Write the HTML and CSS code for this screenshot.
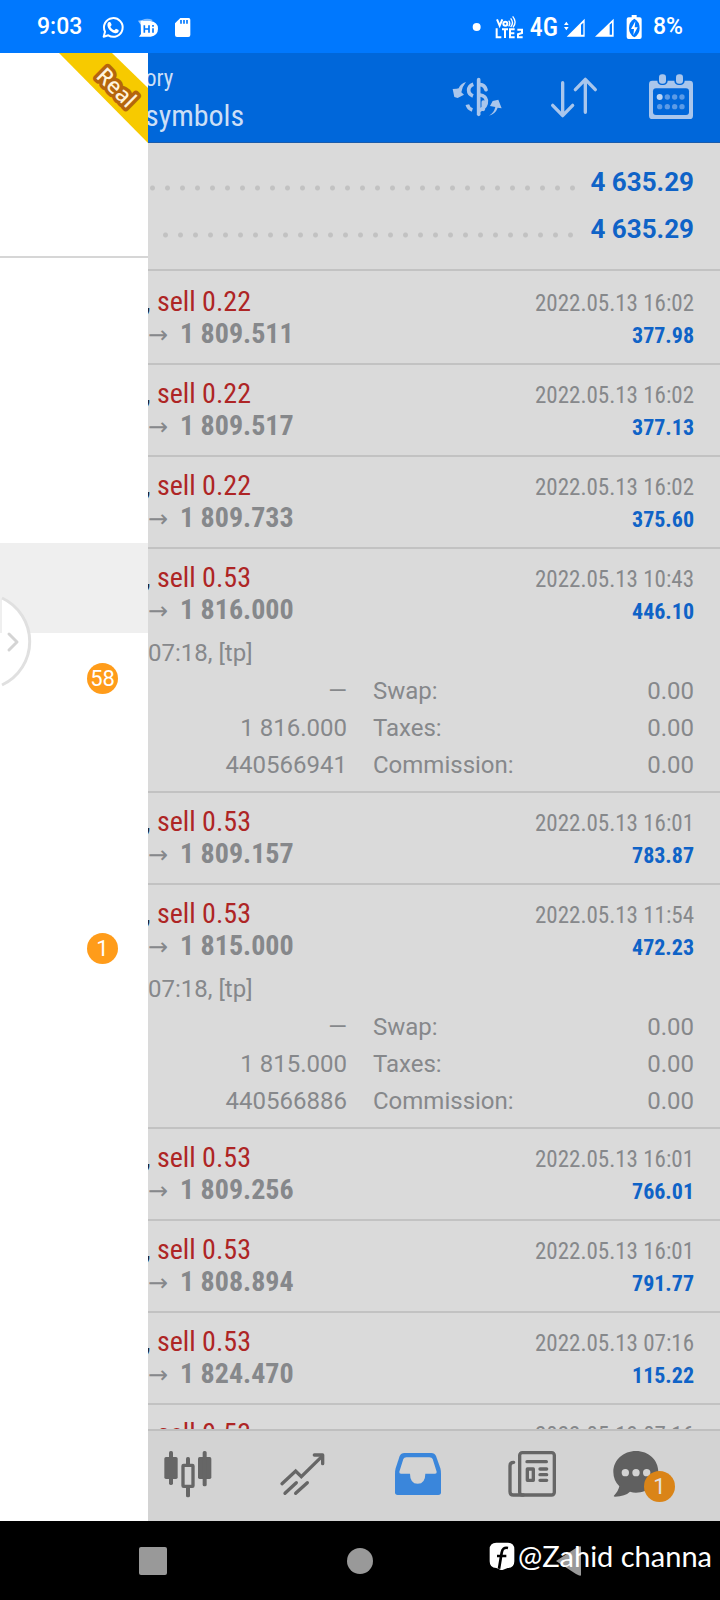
FILE: index.html
```html
<!DOCTYPE html>
<html lang="en">
<head>
<meta charset="utf-8">
<meta name="viewport" content="width=device-width, initial-scale=1">
<title>History</title>
<link rel="stylesheet" href="styles.css">
</head>
<body>
<div class="phone">
  <div class="status">
    <span class="status-text time">9:03</span>
    <svg class="notifs" width="96" height="28" viewBox="300 36 288 84" aria-hidden="true">
      <path d="M311 107l4-15a28 28 0 1 1 10 11z" fill="none" stroke="#fff" stroke-width="6" stroke-linejoin="round"/>
      <path d="M323 67c3-6 8-5 10 0l2 5-4 5c3 6 7 9 12 11l5-5 8 4c1 8-6 11-13 9-12-3-24-17-20-29z" fill="#fff"/>
      <path d="M414 59l14-2-6 14z" fill="#fff" opacity=".6"/><path d="M426 57q16-8 32 0l-4 5h-30z" fill="#fff" opacity=".5"/>
      <path d="M422 60h28q24 3 24 23t-22 24h-35l6-8z" fill="#fff"/>
      <path d="M433 73v22M447 73v22M433 84h14M459 82v13M459 72v5" stroke="#0078fe" stroke-width="5" fill="none"/>
      <path d="M541 51h25q5 0 5 5v46q0 6-6 6h-34q-6 0-6-6V67z" fill="#fff"/>
      <path d="M543 57v11M552 57v11M561 57v11" stroke="#0078fe" stroke-width="5"/>
    </svg>
    <span class="spacer"></span>
    <svg width="52" height="28" viewBox="334 36 156 84" aria-hidden="true" fill="none" stroke="#fff" stroke-width="6">
      <circle cx="348" cy="78" r="12" fill="#fff" stroke="none"/>
      <path d="M409 55l8 19 8-19"/><circle cx="434" cy="68" r="6"/><path d="M444 59q7 8 0 17M450 52q11 13 0 26M456 46q14 17 1 33" stroke-width="4"/>
      <path d="M408 82v27h14M424 85h18M433 85v26M462 85h-14v24h14M448 97h13M470 86h14v10l-12 4v9h14"/>
    </svg>
    <span class="status-text net">4G</span>
    <svg class="signals" width="80" height="28" viewBox="610 36 240 84" aria-hidden="true">
      <path d="M620 62l7 10h-14zM620 88l7-10h-14z" fill="#fff"/>
      <path d="M621 107l54-54v54zM706 107l56-54v54z" fill="#fff"/>
      <path d="M664 71v30h7V65zM750 71v30h7V65z" fill="#0078fe"/>
      <path d="M816 42h15v7h9q6 0 6 6v53q0 6-6 6h-33q-6 0-6-6V55q0-6 6-6h9z" fill="#fff"/>
      <path d="M824 53q-16 9-16 28t16 28q16-9 16-28t-16-28z" fill="#0078fe"/>
      <path d="M827 61l-13 23h9l-2 19 13-24h-9z" fill="#fff"/>
    </svg>
    <span class="status-text">8%</span>
  </div>

  <div class="app">
    <nav class="drawer" aria-label="Main menu">
      <div class="drawer-head">
        <svg class="ribbon" width="89" height="90" viewBox="0 0 89 90" role="img" aria-label="Real">
          <path d="M0 0h53l36 35v55z" fill="#f7ca00"/>
          <text class="ribbon-text" x="36" y="24" transform="rotate(45 36 24)">Real</text>
        </svg>
      </div>
      <ul class="menu">
        <li></li><li></li><li></li><li class="selected"></li>
        <li><span class="badge">58</span></li><li></li><li></li>
        <li><span class="badge">1</span></li>
      </ul>
      <button class="handle" aria-label="Open panel">
        <svg width="34" height="92" viewBox="0 0 34 92">
          <path d="M2 2A48 48 0 0 1 2 89" fill="#fff" stroke="#e0e0e0" stroke-width="3"/>
          <path d="M9 38l8 8-8 8" fill="none" stroke="#d4d4d4" stroke-width="3" stroke-linecap="round" stroke-linejoin="round"/>
        </svg>
      </button>
    </nav>

    <main class="content">
      <header class="topbar">
        <div class="titles"><div class="title">ory</div><div class="subtitle">symbols</div></div>
        <button aria-label="Symbol">
          <svg width="52" height="44" viewBox="270 228 156 132" fill="none" stroke="#a9c6ec" stroke-width="11" stroke-linecap="round">
            <path d="M356 239v104"/>
            <path d="M360 254q14 1 18 15M360 285q17 2 19 16 2 20-22 31M370 306v22"/>
            <path d="M340 253q-14 5-14 18 0 12 13 17M322 314q3 12 15 16" stroke-linecap="butt"/>
            <path d="M318 246q-17 5-22 19l-6 1-12 1 5 24 10 3 19-10-8-7q3-18 14-31zM387 347q15-8 19-26l-16-3 8-15 17-4 10 26-12-2q-6 18-26 24z" fill="#a9c6ec" stroke="none"/>
          </svg>
        </button>
        <button aria-label="Sort">
          <svg width="50" height="44" viewBox="570 228 150 132" fill="none" stroke="#a9c6ec" stroke-width="10" stroke-linecap="round" stroke-linejoin="round">
            <path d="M608 248v98M578 316l30 31 30-31M676 337v-96M646 269l30-31 30 31"/>
          </svg>
        </button>
        <button aria-label="Period">
          <svg width="46" height="50" viewBox="864 219 138 150">
            <rect x="867" y="242" width="132" height="115" rx="10" fill="#a9c6ec"/>
            <rect x="892" y="218" width="31" height="37" rx="13" fill="#0067da"/><rect x="943" y="218" width="31" height="37" rx="13" fill="#0067da"/>
            <rect x="897" y="223" width="21" height="28" rx="9" fill="#a9c6ec"/><rect x="948" y="223" width="21" height="28" rx="9" fill="#a9c6ec"/>
            <rect x="879" y="265" width="108" height="80" rx="9" fill="#0067da"/>
            <circle cx="899" cy="291" r="9" fill="#bdd5f3"/>
            <g fill="#5c9be6"><circle cx="922" cy="291" r="8"/><circle cx="944" cy="291" r="8"/><circle cx="966" cy="291" r="8"/><circle cx="899" cy="320" r="8"/><circle cx="922" cy="320" r="8"/><circle cx="944" cy="320" r="8"/><circle cx="966" cy="320" r="8"/></g>
          </svg>
        </button>
      </header>

      <div class="history">
        <section class="summary">
          <div class="sum-row"><span class="dots"></span><b>4 635.29</b></div>
          <div class="sum-row"><span class="dots short"></span><b>4 635.29</b></div>
        </section>
        <article class="deal"><div class="head"><span class="type"><i>,</i> sell 0.22</span><time>2022.05.13 16:02</time><span class="price"><span class="arrow">→</span>1 809.511</span><b class="profit">377.98</b></div></article>
        <article class="deal"><div class="head"><span class="type"><i>,</i> sell 0.22</span><time>2022.05.13 16:02</time><span class="price"><span class="arrow">→</span>1 809.517</span><b class="profit">377.13</b></div></article>
        <article class="deal"><div class="head"><span class="type"><i>,</i> sell 0.22</span><time>2022.05.13 16:02</time><span class="price"><span class="arrow">→</span>1 809.733</span><b class="profit">375.60</b></div></article>
        <article class="deal"><div class="head"><span class="type"><i>,</i> sell 0.53</span><time>2022.05.13 10:43</time><span class="price"><span class="arrow">→</span>1 816.000</span><b class="profit">446.10</b></div>
          <div class="details"><p>07:18, [tp]</p>
            <table>
              <tr><td class="own">—</td><th scope="row">Swap:</th><td>0.00</td></tr>
              <tr><td class="own">1 816.000</td><th scope="row">Taxes:</th><td>0.00</td></tr>
              <tr><td class="own">440566941</td><th scope="row">Commission:</th><td>0.00</td></tr>
            </table></div></article>
        <article class="deal"><div class="head"><span class="type"><i>,</i> sell 0.53</span><time>2022.05.13 16:01</time><span class="price"><span class="arrow">→</span>1 809.157</span><b class="profit">783.87</b></div></article>
        <article class="deal"><div class="head"><span class="type"><i>,</i> sell 0.53</span><time>2022.05.13 11:54</time><span class="price"><span class="arrow">→</span>1 815.000</span><b class="profit">472.23</b></div>
          <div class="details"><p>07:18, [tp]</p>
            <table>
              <tr><td class="own">—</td><th scope="row">Swap:</th><td>0.00</td></tr>
              <tr><td class="own">1 815.000</td><th scope="row">Taxes:</th><td>0.00</td></tr>
              <tr><td class="own">440566886</td><th scope="row">Commission:</th><td>0.00</td></tr>
            </table></div></article>
        <article class="deal"><div class="head"><span class="type"><i>,</i> sell 0.53</span><time>2022.05.13 16:01</time><span class="price"><span class="arrow">→</span>1 809.256</span><b class="profit">766.01</b></div></article>
        <article class="deal"><div class="head"><span class="type"><i>,</i> sell 0.53</span><time>2022.05.13 16:01</time><span class="price"><span class="arrow">→</span>1 808.894</span><b class="profit">791.77</b></div></article>
        <article class="deal"><div class="head"><span class="type"><i>,</i> sell 0.53</span><time>2022.05.13 07:16</time><span class="price"><span class="arrow">→</span>1 824.470</span><b class="profit">115.22</b></div></article>
        <article class="deal"><div class="head"><span class="type"><i>,</i> sell 0.53</span><time>2022.05.13 07:16</time></div></article>
      </div>

      <footer class="tabs">
        <button aria-label="Quotes">
          <svg width="48" height="52" viewBox="101 210 144 156" fill="#666">
            <rect x="102" y="231" width="40" height="66" rx="5"/><rect x="116" y="213" width="12" height="102" rx="5"/>
            <rect x="203" y="231" width="40" height="66" rx="5"/><rect x="217" y="213" width="12" height="106" rx="5"/>
            <rect x="167" y="231" width="12" height="24" rx="5"/><rect x="167" y="318" width="12" height="34" rx="5"/>
            <rect x="158" y="256" width="30" height="63" fill="none" stroke="#666" stroke-width="10" rx="2"/>
          </svg>
        </button>
        <button aria-label="Charts">
          <svg width="48" height="52" viewBox="446 210 144 156" fill="none" stroke="#666" stroke-width="10" stroke-linecap="round">
            <path d="M455 311l41-38 17 17 62-61M464 340l34-32M496 340l35-32"/><path d="M552 225h25v26" stroke-linejoin="round"/>
          </svg>
        </button>
        <button aria-label="History" aria-current="page">
          <svg width="48" height="52" viewBox="792 210 144 156">
            <path d="M823 219h81q10 0 14 9l13 37q2 8 2 16v56q0 8-8 8H803q-8 0-8-8v-56q0-8 2-16l12-37q4-9 14-9z" fill="#3a86db"/>
            <path d="M829 232h69q8 0 10 5l12 38q1 6-5 6h-29q0 30-23 30t-23-30h-27q-6 0-5-6l12-38q2-5 9-5z" fill="#d3d3d3"/>
          </svg>
        </button>
        <button aria-label="News">
          <svg width="48" height="52" viewBox="267 210 144 156" fill="none" stroke="#666" stroke-width="10" stroke-linecap="round" stroke-linejoin="round">
            <rect x="302" y="218" width="104" height="127" rx="8"/><path d="M284 247q-11 0-11 10v78q0 10 10 10h30" />
            <path d="M324 245h58M363 267h20M363 284h20M363 301h20"/><rect x="325" y="267" width="18" height="34"/>
          </svg>
        </button>
        <button aria-label="Messages">
          <svg width="72" height="52" viewBox="573 210 216 156">
            <path d="M648 213c38 0 67 27 67 63s-29 62-67 62q-9 0-18-3-14 14-45 15-6 0-2-4 13-15 15-27-18-18-18-43c0-36 30-63 68-63z" fill="#606060"/>
            <g fill="#d3d3d3"><circle cx="616" cy="278" r="11"/><circle cx="648" cy="278" r="11"/><circle cx="680" cy="278" r="11"/></g>
          </svg>
          <span class="badge tab-badge">1</span>
        </button>
      </footer>
    </main>
  </div>

  <div class="sysnav">
    <button aria-label="Recent apps"><svg width="30" height="30" viewBox="0 0 30 30"><rect x="1" y="1" width="28" height="28" rx="2" fill="#999"/></svg></button>
    <button aria-label="Home"><svg width="30" height="30" viewBox="0 0 30 30"><circle cx="15" cy="15" r="13" fill="#999"/></svg></button>
    <button aria-label="Back"><svg width="30" height="30" viewBox="0 0 30 30"><path d="M29 1v28Q29 31 24 28L4 15 24 2q5-3 5-1z" fill="#999"/></svg></button>
    <div class="credit">
      <svg width="26" height="28" viewBox="216 490 78 84" aria-hidden="true">
        <path d="M238 492h34q20 0 20 20v36q0 20-20 20l-18 7-16-7q-20 0-20-20v-36q0-20 20-20z" fill="#fff"/>
        <path d="M273 508q-16-4-19 14l-8 48M240 532h28" fill="none" stroke="#000" stroke-width="8"/>
      </svg><span>@Zahid channa</span>
    </div>
  </div>
</div>
</body>
</html>
```
FILE: styles.css
```css
* { box-sizing: border-box; }
body { margin: 0; font-family: Roboto, "Liberation Sans", sans-serif; background: #000; }
button { border: 0; padding: 0; background: none; font: inherit; color: inherit; }
svg { display: block; }
.phone { height: 100vh; display: flex; flex-direction: column; overflow: hidden; }

.status { flex: none; height: 53px; padding: 0 37px; display: flex; align-items: center; background: #0078fe; color: #fff; }
.status-text { font-size: 23px; font-weight: 500; line-height: 28px; }
.notifs { margin-left: 18px; }
.spacer { flex: 1; }
.net { font-family: "Roboto Condensed", Roboto, sans-serif; font-size: 26px; margin: 0 5px 0 6px; }
.signals { margin-right: 10px; }

.app { flex: 1; min-height: 0; display: flex; }
.drawer { flex: none; width: 148px; background: #fff; position: relative; }
.drawer-head { height: 205px; border-bottom: 2px solid #d6d6d6; display: flex; justify-content: flex-end; }
.ribbon-text { font: 500 22px "Noto Sans", sans-serif; fill: #fff3dc; stroke: #b5650c; stroke-width: 7px; stroke-linejoin: round; paint-order: stroke; }
.menu { list-style: none; margin: 0; padding: 15px 0 0; }
.menu li { height: 90px; padding-right: 30px; display: flex; align-items: center; justify-content: flex-end; }
.menu .selected { background: #efefef; }
.badge { width: 31px; height: 31px; border-radius: 50%; background: #ff9c1a; color: #fff; font-size: 22px; line-height: 32px; text-align: center; }
.handle { position: absolute; left: 0; top: 543px; }

.content { flex: 1; min-width: 0; display: flex; flex-direction: column; overflow: hidden; background: #dadada; }
.topbar { flex: none; height: 90px; padding-right: 26px; display: flex; align-items: center; gap: 48px; background: #0067da; border-bottom: 1px solid #1a5cab; color: #ccdff6; font-family: "Roboto Condensed", Roboto, sans-serif; }
.titles { flex: 1; margin-left: -3px; }
.title { font-size: 23px; line-height: 36px; }
.subtitle { font-size: 30px; line-height: 38px; }

.history { flex: 1; min-height: 0; overflow: hidden; }
.summary { padding: 15px 26px 17px 0; margin-bottom: 2px; border-bottom: 2px solid #c2c2c2; }
.sum-row { display: flex; align-items: center; height: 47px; }
.sum-row b { font-size: 26px; color: #0f63c7; }
.dots { flex: 1; height: 6px; margin: 12px 13px 0 -3px; background: radial-gradient(circle, #c2c2c2 2px, transparent 3px) 0 0 / 15px 6px repeat-x; }
.dots.short { margin-left: 10px; }

.deal { border-bottom: 2px solid #c2c2c2; padding: 13px 26px 13px 0; }
.deal:has(.details) { padding-bottom: 7px; }
.head { display: grid; grid-template-columns: 1fr auto; grid-template-rows: 32px 32px; align-items: baseline; font-family: "Roboto Condensed", Roboto, sans-serif; line-height: 32px; font-size: 23px; }
.type { margin-left: -3px; font-size: 28px; color: #ae2525; }
.type i { font-style: normal; color: #222; }
time { text-align: right; color: #86888b; }
.price { font-size: 28px; font-weight: 700; color: #86888b; display: flex; align-items: baseline; }
.arrow { font: 24px/32px "DejaVu Sans", sans-serif; width: 32px; }
.profit { font-size: 22px; text-align: right; color: #0f63c7; }
.details { padding-top: 9px; font-size: 24px; line-height: 37px; color: #86888b; }
.details p { margin: 0 0 1px; }
.details table { width: 100%; border-collapse: collapse; }
.details td, .details th { padding: 0; font-weight: 400; text-align: right; }
.details .own { width: 199px; }
.details th { text-align: left; padding-left: 26px; }

.tabs { flex: none; height: 92px; padding: 0 37px 0 4px; display: flex; align-items: center; justify-content: space-between; background: #d3d3d3; border-top: 2px solid #bfbfbf; }
.tabs button { width: 72px; display: flex; justify-content: center; position: relative; }
.tab-badge { position: absolute; left: 33px; top: 21px; background: #da8417; color: #e2e2e2; }

.sysnav { flex: none; height: 79px; padding: 0 138px; display: flex; align-items: center; justify-content: space-between; position: relative; background: #000; }
.credit { position: absolute; right: 8px; top: 18px; display: flex; align-items: center; gap: 3px; color: #fff; font: 29px/34px Lato, sans-serif; }
```
